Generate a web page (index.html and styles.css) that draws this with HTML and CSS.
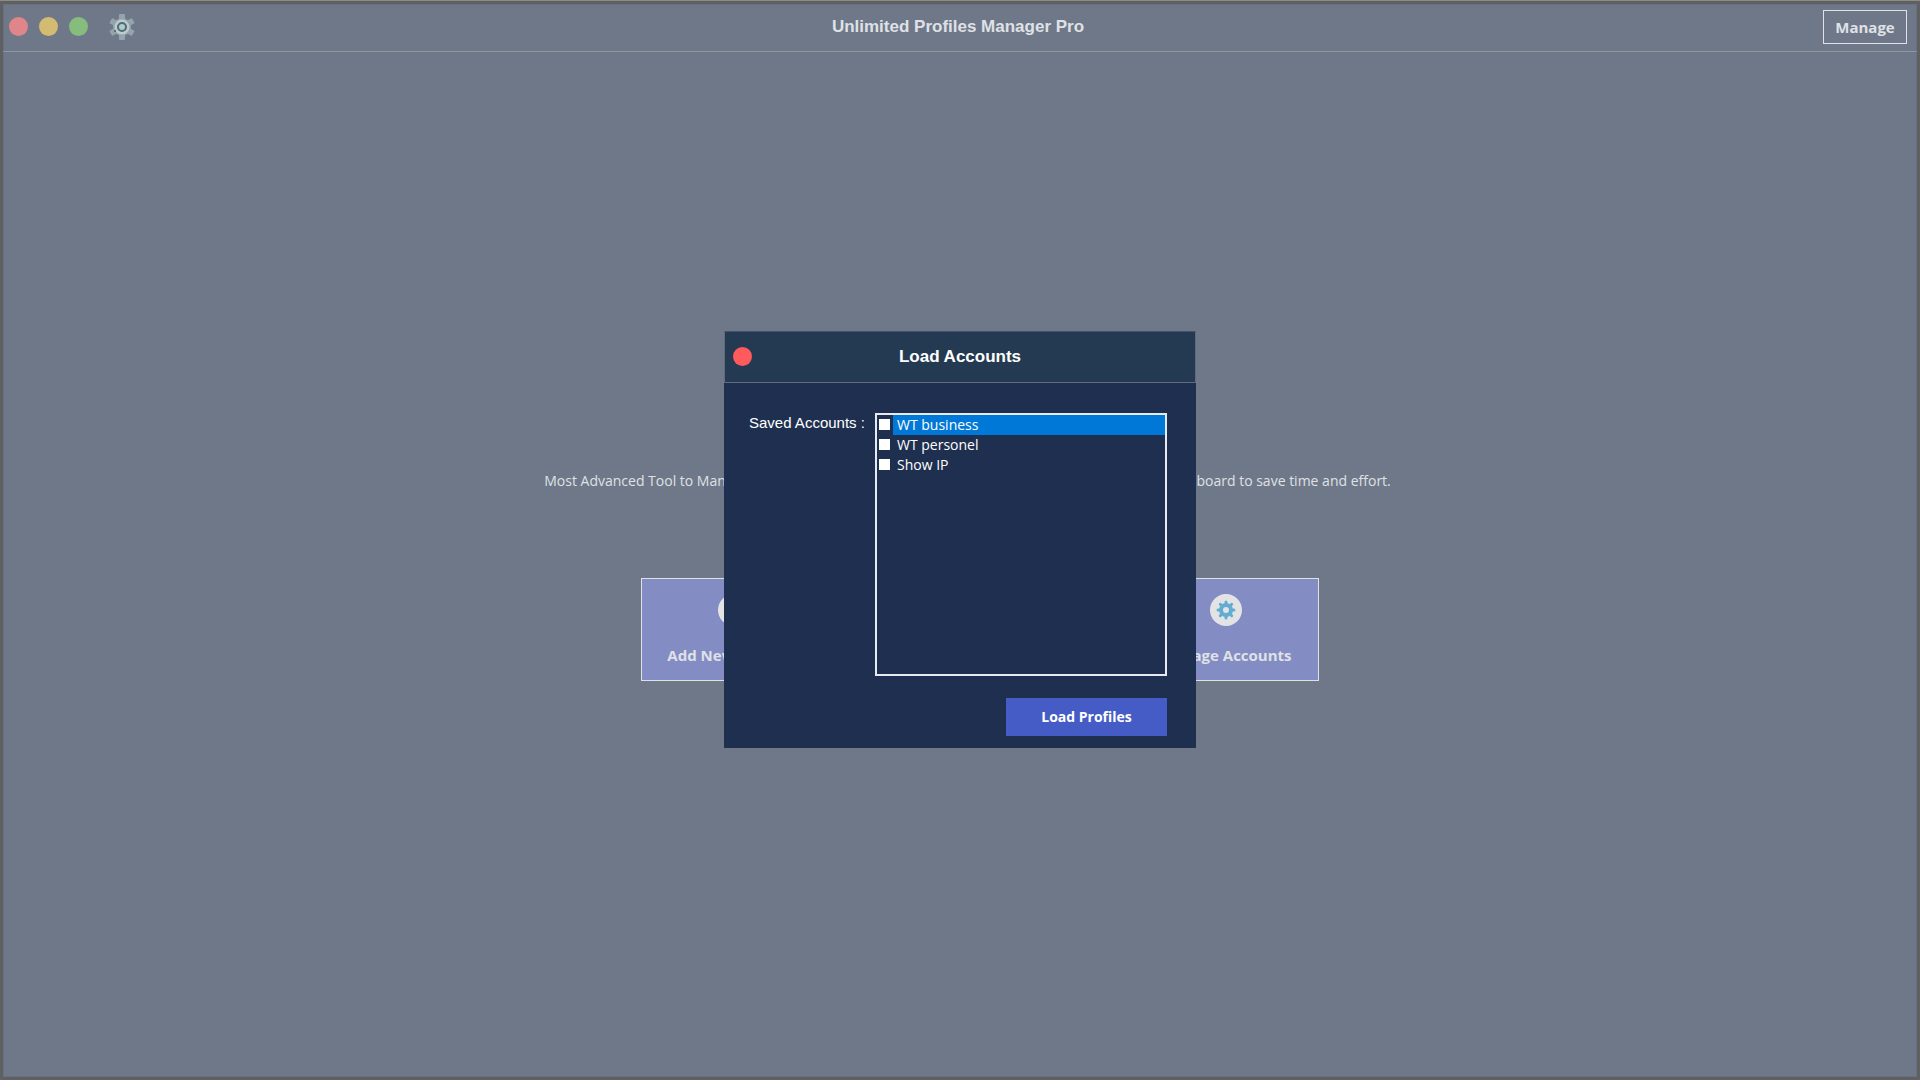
FILE: index.html
```html
<!DOCTYPE html>
<html lang="en">
<head>
    <meta charset="UTF-8">
    <meta name="viewport" content="width=device-width, initial-scale=1.0">
    <title>Unlimited Profiles Manager Pro</title>
    <link rel="stylesheet" href="styles.css">
</head>
<body>
    <div class="window">
        <header class="titlebar">
            <div class="controls">
                <button class="dot close" type="button" aria-label="Close"></button>
                <button class="dot minimize" type="button" aria-label="Minimize"></button>
                <button class="dot maximize" type="button" aria-label="Maximize"></button>
                <button class="settings" type="button" aria-label="Settings">
                    <svg viewBox="0 0 26 26" width="26" height="26">
                        <g fill="#93a4ac">
                            <rect x="10" y="0" width="6" height="26" rx="1"/>
                            <rect x="10" y="0" width="6" height="26" rx="1" transform="rotate(60 13 13)"/>
                            <rect x="10" y="0" width="6" height="26" rx="1" transform="rotate(120 13 13)"/>
                            <circle cx="13" cy="13" r="9"/>
                        </g>
                        <circle cx="13" cy="13" r="6" fill="none" stroke="#bccbce" stroke-width="3"/>
                        <circle cx="13" cy="13" r="4" fill="#a9cdd1" stroke="#566a73" stroke-width="2"/>
                        <circle cx="6" cy="17" r="1" fill="#4f5c68"/>
                    </svg>
                </button>
            </div>
            <h1>Unlimited Profiles Manager Pro</h1>
            <button class="manage" type="button">Manage</button>
        </header>

        <main>
            <p class="tagline">Most Advanced Tool to Manage Multiple Accounts and all of their Profiles at once from a single Dashboard to save time and effort.</p>
            <div class="cards">
                <button class="card" type="button">
                    <svg viewBox="0 0 32 32" width="32" height="32">
                        <circle cx="16" cy="16" r="16" fill="#e3e3e6"/>
                        <path d="M6 16h20M16 6v20" stroke="#5f7480" stroke-width="3"/>
                    </svg>
                    <span>Add New Account</span>
                </button>
                <button class="card" type="button">
                    <svg viewBox="0 0 32 32" width="32" height="32">
                        <circle cx="16" cy="16" r="16" fill="#e3e3e6"/>
                        <path d="M16 7v14M10 16l6 6 6-6" fill="none" stroke="#62add0" stroke-width="3"/>
                    </svg>
                    <span>Load Accounts</span>
                </button>
                <button class="card" type="button">
                    <svg viewBox="0 0 32 32" width="32" height="32">
                        <circle cx="16" cy="16" r="16" fill="#e3e3e6"/>
                        <g stroke="#62add0" stroke-width="3" stroke-linecap="round">
                            <path d="M16 8v16M8 16h16M10.3 10.3l11.4 11.4M21.7 10.3L10.3 21.7"/>
                        </g>
                        <circle cx="16" cy="16" r="5" fill="#e3e3e6" stroke="#62add0" stroke-width="4"/>
                    </svg>
                    <span>Manage Accounts</span>
                </button>
            </div>
        </main>
    </div>

    <div class="overlay">
        <form class="dialog" role="dialog" aria-labelledby="dialog-title">
            <div class="dialog-header">
                <button class="dot dialog-close" type="button" aria-label="Close dialog"></button>
                <h2 id="dialog-title">Load Accounts</h2>
            </div>
            <div class="dialog-body">
                <span class="list-label" id="list-label">Saved Accounts :</span>
                <ul class="account-list" aria-labelledby="list-label">
                    <li>
                        <input type="checkbox" id="account-1">
                        <label class="selected" for="account-1">WT business</label>
                    </li>
                    <li>
                        <input type="checkbox" id="account-2">
                        <label for="account-2">WT personel</label>
                    </li>
                    <li>
                        <input type="checkbox" id="account-3">
                        <label for="account-3">Show IP</label>
                    </li>
                </ul>
                <button class="load" type="button">Load Profiles</button>
            </div>
        </form>
    </div>
</body>
</html>
```
FILE: styles.css
```css
:root {
    --window-bg: #6f7888;
    --frame: #5f6062;
    --text-dim: #dfe1e6;
    --card-bg: #838dc3;
    --dialog-bg: #1e2f4f;
    --dialog-header: #243a53;
    --primary: #455cc7;
    --selected: #0078d7;
}

* {
    box-sizing: border-box;
    margin: 0;
    padding: 0;
}

body {
    font-family: "Open Sans", sans-serif;
    font-size: 14px;
    color: var(--text-dim);
    border-top: 1px solid #8b8c88;
    background-color: var(--frame);
}

button {
    font-family: inherit;
    color: inherit;
    border: none;
    background: none;
    cursor: pointer;
}

.window {
    display: flex;
    flex-direction: column;
    min-height: calc(100vh - 1px);
    background-color: var(--window-bg);
    border: 3px solid var(--frame);
    box-shadow: inset 0 0 0 1px #687080;
}

.titlebar {
    display: grid;
    grid-template-columns: 1fr auto 1fr;
    align-items: center;
    height: 48px;
    padding: 0 10px 2px 6px;
    border-bottom: 1px solid #8f979c;
}

.controls {
    display: flex;
    align-items: center;
    gap: 11px;
}

.dot {
    width: 19px;
    height: 19px;
    border-radius: 50%;
}

.close {
    background-color: #e0868a;
}

.minimize {
    background-color: #d3bb72;
}

.maximize {
    background-color: #86bd7c;
}

.settings {
    width: 26px;
    height: 26px;
    margin-left: 10px;
}

.settings svg {
    display: block;
}

h1,
h2 {
    font-family: "Liberation Sans", Arial, sans-serif;
    font-size: 17px;
    font-weight: bold;
    line-height: 20px;
}

.manage {
    justify-self: end;
    width: 84px;
    height: 34px;
    border: 1px solid var(--text-dim);
    font-size: 15px;
    font-weight: 700;
}

main {
    flex: 1;
    display: flex;
    flex-direction: column;
    justify-content: center;
    align-items: center;
    gap: 86px;
    padding-top: 22px;
}

.tagline {
    padding-left: 15px;
    line-height: 22px;
    white-space: nowrap;
}

.cards {
    display: flex;
    gap: 60px;
    padding-left: 39px;
}

.card {
    display: flex;
    flex-direction: column;
    align-items: center;
    gap: 18px;
    width: 186px;
    height: 103px;
    padding-top: 15px;
    background-color: var(--card-bg);
    border: 1px solid var(--text-dim);
    font-size: 15px;
    font-weight: 700;
    line-height: 22px;
}

.overlay {
    position: fixed;
    inset: 0;
    display: flex;
    justify-content: center;
    align-items: center;
    padding-bottom: 2px;
}

.dialog {
    width: 472px;
    background-color: var(--dialog-bg);
    color: #ffffff;
}

.dialog-header {
    display: grid;
    grid-template-columns: 1fr auto 1fr;
    align-items: center;
    height: 52px;
    padding: 0 8px;
    background-color: var(--dialog-header);
    border: 1px solid #5f6d7a;
    border-top-color: #42566a;
}

.dialog-close {
    background-color: #ff5a5c;
}

.dialog-body {
    display: grid;
    grid-template-columns: auto 292px;
    justify-content: space-between;
    row-gap: 22px;
    padding: 30px 29px 12px 25px;
}

.list-label {
    font-family: "Liberation Sans", Arial, sans-serif;
    font-size: 15px;
    line-height: 20px;
}

.account-list {
    height: 263px;
    border: 2px solid #e6ebf2;
    list-style: none;
}

.account-list li {
    display: flex;
    align-items: center;
    height: 20px;
    padding-left: 2px;
    gap: 3px;
}

.account-list input {
    appearance: none;
    width: 11px;
    height: 11px;
    background-color: #ffffff;
}

.account-list input:checked {
    background-color: var(--selected);
    border: 2px solid #ffffff;
}

.account-list label {
    flex: 1;
    padding-left: 4px;
    line-height: 20px;
}

.account-list .selected {
    background-color: var(--selected);
}

.load {
    grid-column: 2;
    justify-self: end;
    width: 161px;
    height: 38px;
    background-color: var(--primary);
    font-size: 14px;
    font-weight: 700;
}
```
